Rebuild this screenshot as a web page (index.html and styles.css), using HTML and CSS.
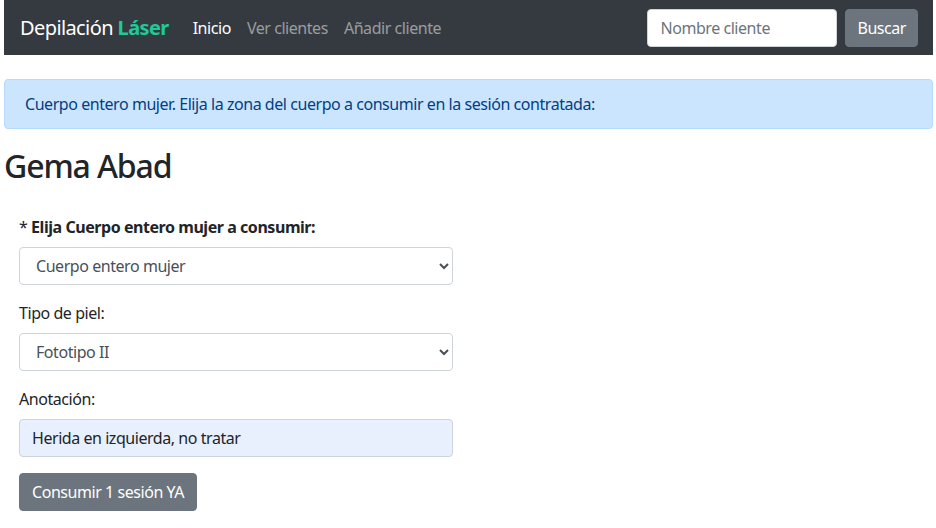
FILE: index.html
```html
<!DOCTYPE html>
<html lang="es">
<head>
<meta charset="utf-8">
<title>Depilación Láser</title>
<link rel="stylesheet" href="styles.css">
</head>
<body>
<nav class="navbar">
  <a class="brand" href="#">Depilación <b class="brand-accent">Láser</b></a>
  <ul class="nav">
    <li><a class="nav-link active" href="#">Inicio</a></li>
    <li><a class="nav-link" href="#">Ver clientes</a></li>
    <li><a class="nav-link" href="#">Añadir cliente</a></li>
  </ul>
  <form class="search">
    <input class="search-input" type="text" placeholder="Nombre cliente">
    <button class="btn btn-secondary btn-search" type="button">Buscar</button>
  </form>
</nav>
<div class="alert">Cuerpo entero mujer. Elija la zona del cuerpo a consumir en la sesión contratada:</div>
<h2 class="title">Gema Abad</h2>
<form class="form">
  <div class="group">
    <label class="label">* <b>Elija Cuerpo entero mujer a consumir:</b></label>
    <select class="control"><option>Cuerpo entero mujer</option></select>
  </div>
  <div class="group">
    <label class="label">Tipo de piel:</label>
    <select class="control"><option>Fototipo II</option></select>
  </div>
  <div class="group">
    <label class="label">Anotación:</label>
    <input class="control control-filled" type="text" value="Herida en izquierda, no tratar">
  </div>
  <button class="btn btn-secondary" type="button">Consumir 1 sesión YA</button>
</form>
</body>
</html>
```

FILE: styles.css
```css
* { box-sizing: border-box; }
html, body { margin: 0; }
body {
  padding: 0 3px 0 4px;
  font-family: "Noto Sans", "Open Sans", sans-serif;
  font-size: 16px;
  line-height: 1.5;
  letter-spacing: -0.028em;
  color: #212529;
  background: #fff;
}
.navbar {
  display: flex;
  align-items: center;
  height: 55px;
  padding: 0 15px 0 16px;
  background: #343a40;
}
.brand {
  color: #fff;
  text-decoration: none;
  font-size: 20px;
  line-height: 30px;
  letter-spacing: -0.03em;
  margin-right: 16px;
}
.brand-accent { color: #20c997; font-weight: 700; }
.nav {
  display: flex;
  list-style: none;
  margin: 0;
  padding: 0;
  flex: 1;
}
.nav-link {
  display: block;
  padding: 8px;
  color: rgba(255,255,255,.5);
  text-decoration: none;
}
.nav-link.active { color: #fff; }
.search { display: flex; gap: 8px; }
.search-input {
  width: 190px;
  height: 38px;
  padding: 6px 12px;
  font: inherit;
  letter-spacing: inherit;
  color: #495057;
  border: 1px solid #ced4da;
  border-radius: 4px;
  background: #fff;
}
.search-input::placeholder { color: #6c757d; }
.btn {
  height: 38px;
  padding: 6px 12px;
  font: inherit;
  letter-spacing: inherit;
  line-height: 24px;
  border: 1px solid transparent;
  border-radius: 4px;
  cursor: pointer;
}
.btn-search { padding: 6px 11px; }
.btn-secondary { background: #6c757d; border-color: #6c757d; color: #fff; }
.alert {
  margin: 24px 0 18px;
  padding: 12px 20px;
  background: #cce5ff;
  border: 1px solid #b8daff;
  border-radius: 4px;
  color: #004085;
}
.title {
  margin: 0 0 8px;
  font-size: 32px;
  font-weight: 500;
  line-height: 1.2;
  letter-spacing: -0.035em;
}
.form {
  width: 464px;
  padding: 22px 15px 0;
}
.group { margin-bottom: 16px; }
.label { display: block; margin-bottom: 8px; }
.control {
  display: block;
  width: 100%;
  height: 38px;
  padding: 6px 12px;
  font: inherit;
  letter-spacing: inherit;
  color: #495057;
  background: #fff;
  border: 1px solid #ced4da;
  border-radius: 4px;
}
.control-filled { background: #e8f0fe; color: #212529; }
```
